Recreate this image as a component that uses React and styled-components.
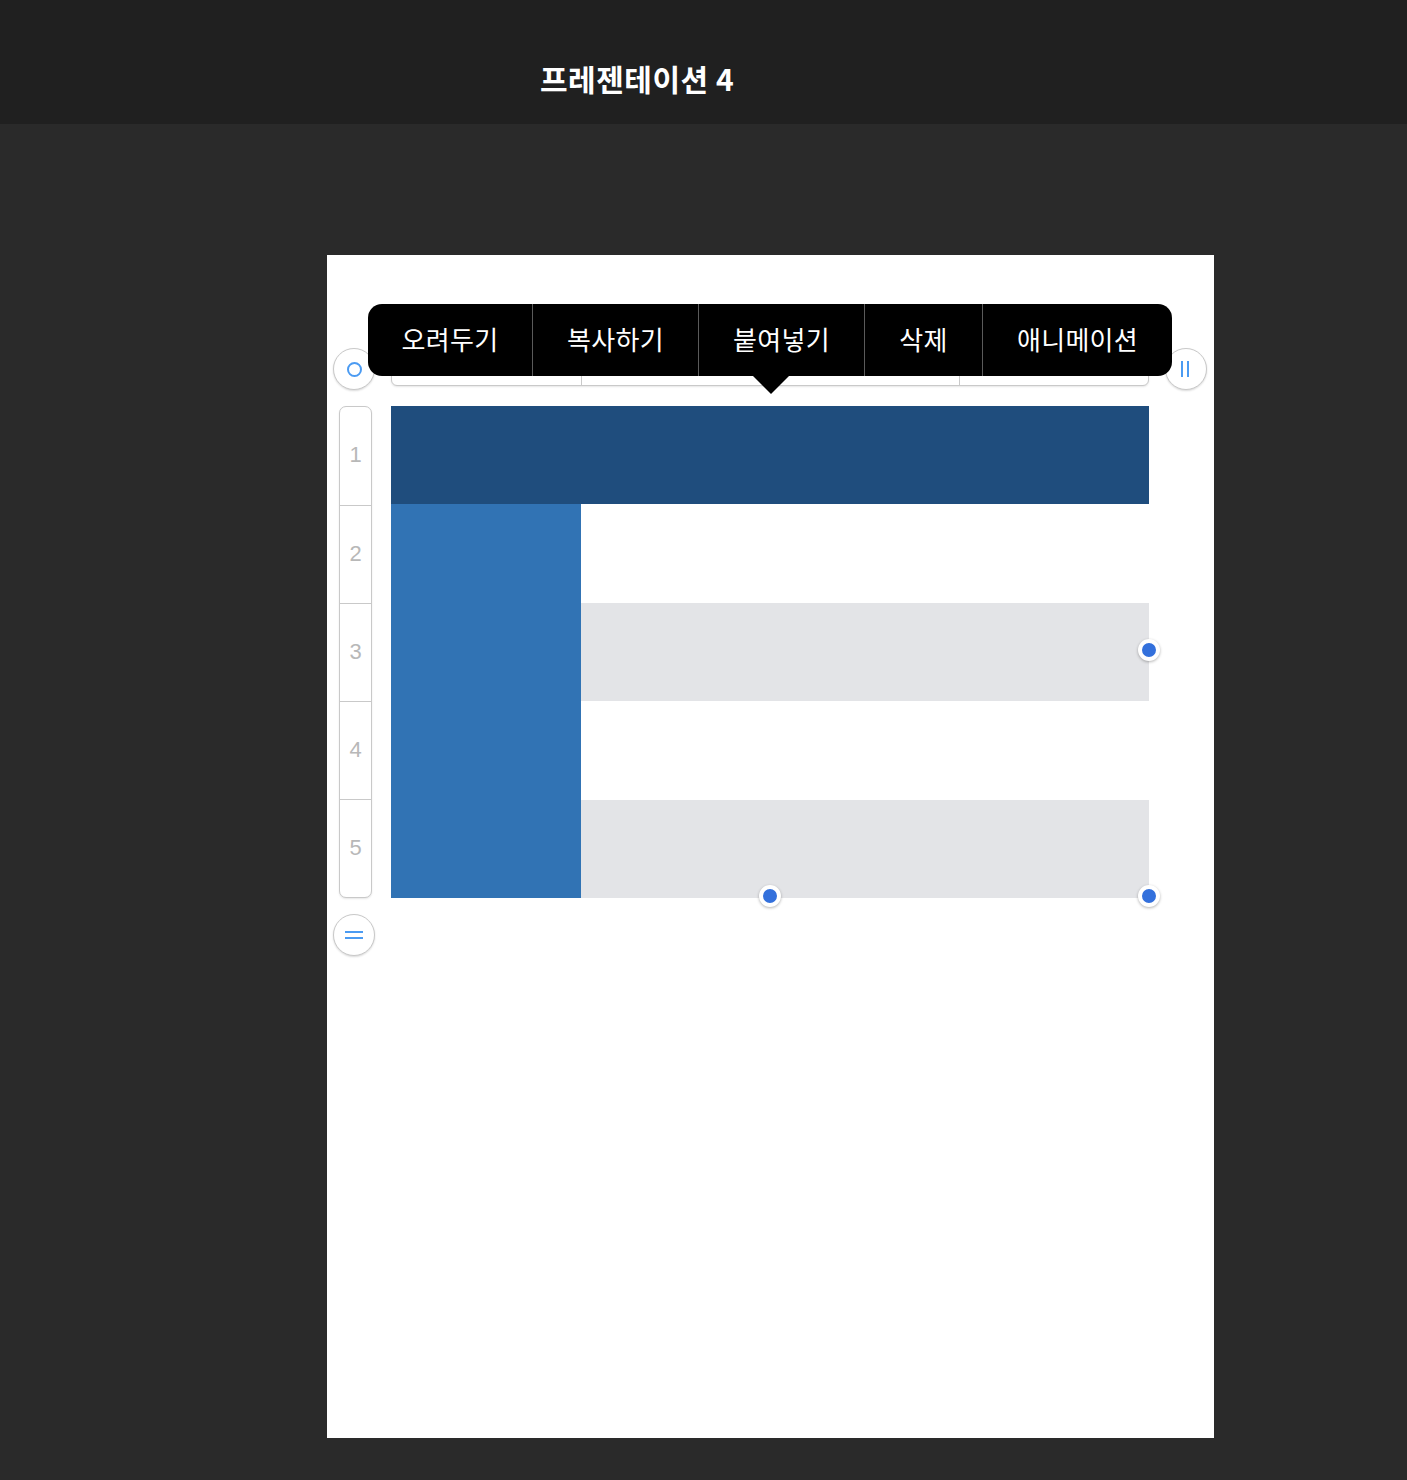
import styled, { createGlobalStyle } from "styled-components";

const GlobalStyle = createGlobalStyle`
  html, body {
    margin: 0;
    padding: 0;
    background: #2a2a2a;
  }
  body {
    font-family: "Noto Sans CJK KR", "Noto Sans", sans-serif;
  }
`;

const menuItems = [
  { label: "오려두기", width: 164 },
  { label: "복사하기", width: 166 },
  { label: "붙여넣기", width: 166 },
  { label: "삭제", width: 118 },
  { label: "애니메이션", width: 190 },
];
const columns = ["A", "B", "C", "D"];
const rows = [1, 2, 3, 4, 5];

function cellColor(r, c) {
  if (r === 0) return "#1f4d7d";
  if (c === 0) return "#3173b4";
  return r % 2 === 0 ? "#e3e4e7" : "#ffffff";
}

function App() {
  return (
    <>
      <GlobalStyle />
      <Page>
        <Header>
          <Title>프레젠테이션 4</Title>
        </Header>
        <Stage>
          <Slide>
            <Editor>
              <CircleButton>
                <RingIcon />
              </CircleButton>
              <ColumnBar>
                {columns.map((c) => (
                  <ColumnCell key={c}>{c}</ColumnCell>
                ))}
              </ColumnBar>
              <CircleButton>
                <BarsIcon $vertical />
              </CircleButton>

              <RowBarWrap>
                <RowBar>
                  {rows.map((n) => (
                    <RowCell key={n}>{n}</RowCell>
                  ))}
                </RowBar>
              </RowBarWrap>
              <TableWrap>
                <Table>
                  {rows.map((_, r) =>
                    columns.map((_, c) => (
                      <Cell key={`${r}-${c}`} $bg={cellColor(r, c)} />
                    ))
                  )}
                </Table>
                <Handle style={{ left: "100%", top: "49.6%" }} />
                <Handle style={{ left: "50%", top: "99.6%" }} />
                <Handle style={{ left: "100%", top: "99.6%" }} />
              </TableWrap>
              <span />

              <CircleButton>
                <BarsIcon />
              </CircleButton>
            </Editor>

            <ContextMenu>
              {menuItems.map((item) => (
                <MenuItem key={item.label} $w={item.width}>
                  {item.label}
                </MenuItem>
              ))}
              <MenuArrow />
            </ContextMenu>
          </Slide>
        </Stage>
      </Page>
    </>
  );
}
export default App;

const Page = styled.div`
  min-height: 1480px;
  background: #2a2a2a;
`;

const Header = styled.header`
  height: 124px;
  background: #202020;
  display: flex;
  align-items: flex-start;
  padding: 58px 0 0 540px;
  box-sizing: border-box;
`;

const Title = styled.h1`
  margin: 0;
  color: #ffffff;
  font-size: 30px;
  line-height: 40px;
  font-weight: 700;
  letter-spacing: 0.5px;
`;

const Stage = styled.main`
  padding: 131px 0 42px 327px;
`;

const Slide = styled.section`
  position: relative;
  width: 887px;
  height: 1183px;
  background: #ffffff;
  box-sizing: border-box;
  padding: 93px 0 0 6px;
`;

const Editor = styled.div`
  display: grid;
  grid-template-columns: 42px 758px 42px;
  grid-template-rows: 42px 492px 42px;
  column-gap: 16px;
  row-gap: 16px;
`;

const CircleButton = styled.div`
  width: 42px;
  height: 42px;
  border-radius: 50%;
  border: 1px solid #c9c9c9;
  box-sizing: border-box;
  background: #ffffff;
  box-shadow: 0 1px 2px rgba(0, 0, 0, 0.15);
  display: flex;
  align-items: center;
  justify-content: center;
`;

const RingIcon = styled.span`
  width: 11px;
  height: 11px;
  border-radius: 50%;
  border: 2px solid #4b9bf2;
`;

const BarsIcon = styled.span`
  display: block;
  width: ${(p) => (p.$vertical ? "8px" : "18px")};
  height: ${(p) => (p.$vertical ? "16px" : "8px")};
  box-sizing: border-box;
  ${(p) =>
    p.$vertical
      ? "border-left: 2px solid #4b9bf2; border-right: 2px solid #4b9bf2;"
      : "border-top: 2px solid #4b9bf2; border-bottom: 2px solid #4b9bf2;"}
  margin-left: ${(p) => (p.$vertical ? "-2px" : "0")};
`;

const ColumnBar = styled.div`
  align-self: center;
  height: 34px;
  display: grid;
  grid-template-columns: repeat(4, 1fr);
  border: 1px solid #c9c9c9;
  border-radius: 6px;
  box-sizing: border-box;
  background: #ffffff;
  box-shadow: 0 1px 2px rgba(0, 0, 0, 0.1);
  overflow: hidden;
`;

const ColumnCell = styled.div`
  display: flex;
  align-items: center;
  justify-content: center;
  color: #bdbdbd;
  font-family: "Liberation Sans", sans-serif;
  font-size: 20px;
  & + & {
    border-left: 1px solid #c9c9c9;
  }
`;

const RowBarWrap = styled.div`
  display: flex;
  padding-left: 6px;
`;

const RowBar = styled.div`
  width: 33px;
  display: grid;
  grid-template-rows: repeat(5, 1fr);
  border: 1px solid #c9c9c9;
  border-radius: 7px;
  box-sizing: border-box;
  background: #ffffff;
  box-shadow: 0 1px 2px rgba(0, 0, 0, 0.1);
`;

const RowCell = styled.div`
  display: flex;
  align-items: center;
  justify-content: center;
  padding-bottom: 2px;
  color: #b8b8b8;
  font-family: "Liberation Sans", sans-serif;
  font-size: 22px;
  & + & {
    border-top: 1px solid #c9c9c9;
  }
`;

const TableWrap = styled.div`
  position: relative;
`;

const Table = styled.div`
  height: 100%;
  display: grid;
  grid-template-columns: 190px 189px 190px 189px;
  grid-template-rows: 98px 99px 98px 99px 98px;
`;

const Cell = styled.div`
  background: ${(p) => p.$bg};
`;

const Handle = styled.span`
  position: absolute;
  width: 22px;
  height: 22px;
  margin: -11px 0 0 -11px;
  border-radius: 50%;
  background: #3370dc;
  border: 4px solid #ffffff;
  box-sizing: border-box;
  box-shadow: 0 1px 3px rgba(0, 0, 0, 0.3);
`;

const ContextMenu = styled.nav`
  position: absolute;
  left: 41px;
  top: 49px;
  height: 72px;
  width: 804px;
  display: flex;
  background: #000000;
  border-radius: 14px;
`;

const MenuItem = styled.div`
  flex: 0 0 ${(p) => p.$w}px;
  box-sizing: border-box;
  display: flex;
  align-items: center;
  justify-content: center;
  padding-bottom: 4px;
  color: #ffffff;
  font-size: 26px;
  font-weight: 400;
  letter-spacing: 0.3px;
  white-space: nowrap;
  & + & {
    border-left: 1px solid #5a5a5a;
  }
`;

const MenuArrow = styled.span`
  position: absolute;
  left: 385px;
  top: 72px;
  width: 0;
  height: 0;
  border-left: 18px solid transparent;
  border-right: 18px solid transparent;
  border-top: 18px solid #000000;
`;
